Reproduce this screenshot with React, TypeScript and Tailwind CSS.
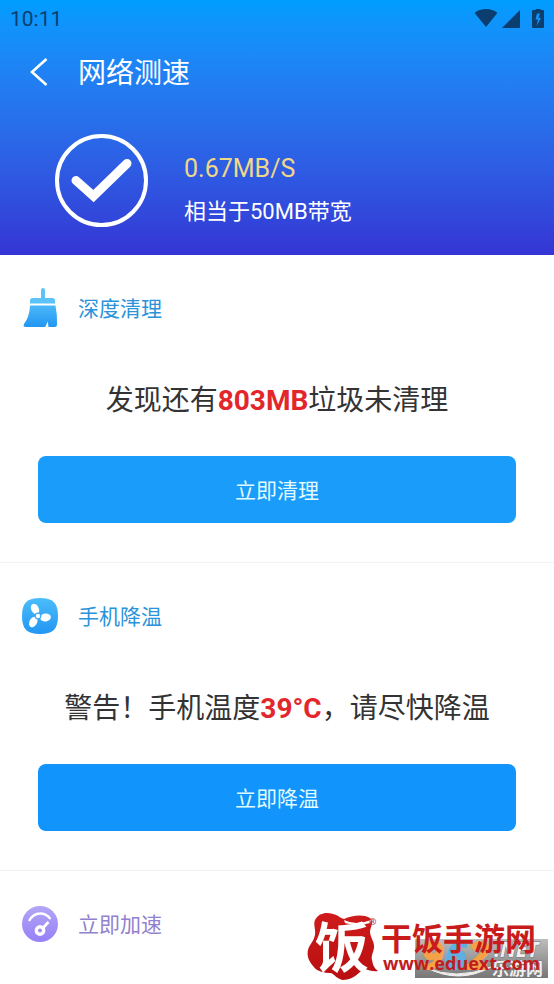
import clsx from "clsx"
import React from "react"

const FOCUS_OUTLINE =
  "outline-none focus-visible:ring-2 focus-visible:ring-sky-200"

const StatusBar = () => {
  return (
    <div className="flex h-[38px] items-center justify-between px-[10px] text-[#0b3e6e]">
      <div className="pt-px text-[21px]">10:11</div>
      <div className="flex items-center">
        <svg className="h-5 w-6" viewBox="0 0 24 20" fill="currentColor">
          <path d="M12 18 .6 4C3.800 1 7.600 0 12 0S20.200 1 23.400 4Z" />
        </svg>
        <svg className="ml-1 h-5 w-[18px]" viewBox="0 0 18 20" fill="currentColor">
          <path d="M18 1v18H0Z" />
        </svg>
        <svg className="ml-3 h-5 w-3" viewBox="0 0 12 20" fill="currentColor">
          <path
            fillRule="evenodd"
            d="M3.500-1h5v2H11q1 0 1 1v16q0 1-1 1H1q-1 0-1-1V2q0-1 1-1h2.500ZM5 4.500 3.500 10.500H6L4.500 17 9 9H6.500L8 4.500Z"
          />
        </svg>
      </div>
    </div>
  )
}

const BroomIcon = () => {
  return (
    <svg className="h-10 w-9" viewBox="0 0 36 40">
      <defs>
        <linearGradient id="broom" x1="0" y1="0" x2="0" y2="1">
          <stop offset="0" stopColor="#4cb8f8" />
          <stop offset="1" stopColor="#2196f3" />
        </linearGradient>
      </defs>
      <path
        d="M19 2q0-2 2-2t2 2v8h7.500q2.500 0 2.500 2.500V15.500H8V12.500Q8 10 10.500 10H19Z"
        fill="#5bc3fa"
      />
      <path
        d="M8 17.500h25.500q2 10 1.500 19.500-.3 2-2 2h-6.500l-.7-5.500-2.600 5.500H4q-3.500 0-2-3 5.500-7 6-18.500Z"
        fill="url(#broom)"
      />
    </svg>
  )
}

const FanIcon = () => {
  return (
    <svg className="size-9" viewBox="0 0 36 36">
      <defs>
        <linearGradient id="fan" x1="0" y1="0" x2="0" y2="1">
          <stop offset="0" stopColor="#4bbdfa" />
          <stop offset="1" stopColor="#2296f3" />
        </linearGradient>
      </defs>
      <path
        d="M18 0C31 0 36 5 36 18S31 36 18 36 0 31 0 18 5 0 18 0Z"
        fill="url(#fan)"
      />
      <g fill="#fff">
        <ellipse cx="13" cy="11" rx="3.800" ry="5.600" transform="rotate(-25 13 11)" />
        <ellipse cx="23.500" cy="19.500" rx="5.400" ry="4" transform="rotate(-8 23.500 19.500)" />
        <ellipse cx="11.300" cy="24" rx="3.800" ry="5.600" transform="rotate(28 11.300 24)" />
      </g>
      <circle cx="16" cy="18" r="2.800" fill="#fff" stroke="#3cabf7" strokeWidth="1.200" />
    </svg>
  )
}

const GaugeIcon = () => {
  return (
    <svg className="size-9" viewBox="0 0 36 36" fill="none">
      <defs>
        <linearGradient id="gauge" x1="0" y1="0" x2="0" y2="1">
          <stop offset="0" stopColor="#b3a6f6" />
          <stop offset="1" stopColor="#9680f6" />
        </linearGradient>
      </defs>
      <circle cx="18" cy="18" r="18" fill="url(#gauge)" />
      <path d="M7 15C10 9.500 13 7.500 18 7.500S25.500 9 28.500 13" stroke="#fff" strokeWidth="2.400" />
      <path d="m20 23 6.500-7" stroke="#fff" strokeWidth="2.600" />
      <circle cx="18" cy="24.500" r="3.700" stroke="#fff" strokeWidth="3.400" />
    </svg>
  )
}

const SectionTitle = ({
  icon,
  className,
  children,
}: {
  icon: React.ReactNode
  className: string
  children: React.ReactNode
}) => {
  return (
    <div className="flex h-9 items-center">
      {icon}
      <h2 className={clsx("ml-5 pt-1 text-[21px]", className)}>{children}</h2>
    </div>
  )
}

const TaskSection = ({
  icon,
  title,
  action,
  buttonClassName,
  children,
}: {
  icon: React.ReactNode
  title: string
  action: string
  buttonClassName: string
  children: React.ReactNode
}) => {
  return (
    <section className="border-b border-[#f3f3f3] px-[38px] pt-[35px] pb-[39px]">
      <div className="-ml-4">
        <SectionTitle icon={icon} className="text-[#2b93d9]">
          {title}
        </SectionTitle>
      </div>
      <p className="mt-[54px] text-center text-[28px] leading-[42px] whitespace-nowrap text-[#333]">
        {children}
      </p>
      <button
        type="button"
        className={clsx(
          "mt-[34px] h-[67px] w-full rounded-lg pt-1 text-[21px] text-[#e2fbff]",
          FOCUS_OUTLINE,
          buttonClassName,
        )}
      >
        {action}
      </button>
    </section>
  )
}

const Watermark = () => {
  return (
    <div className="pointer-events-none absolute right-0 bottom-0">
      <svg
        className="h-[80px] w-[254px]"
        viewBox="300 904 254 80"
        fontFamily="'Open Sans', 'Noto Sans CJK SC', sans-serif"
        fontWeight="bold"
      >
        <defs>
          <linearGradient id="plate" x1="0" y1="0" x2="0" y2="1">
            <stop offset="0" stopColor="#bdbdbd" />
            <stop offset="1" stopColor="#777" />
          </linearGradient>
          <linearGradient id="seal" x1="0" y1="0" x2="0" y2="1">
            <stop offset="0" stopColor="#cf1c1c" />
            <stop offset="1" stopColor="#b80f10" />
          </linearGradient>
        </defs>
        <rect x="415" y="939" width="133" height="39" fill="url(#plate)" />
        <path d="M425 967q30 14 66 0-32 18-66 0Z" fill="#eee" stroke="#eee" />
        <g fontSize="38" fontStyle="italic" strokeWidth="2">
          <text x="422" y="969" fill="#f5a247" stroke="#f5a247">9</text>
          <text x="445" y="969" fill="#5fb0e2" stroke="#5fb0e2">6</text>
          <text x="468" y="969" fill="#f5a247" stroke="#f5a247">2</text>
        </g>
        <g fill="#f0f0f0" stroke="#777" strokeWidth="1" paintOrder="stroke">
          <text x="494" y="957" fontSize="21" fontStyle="italic">.NET</text>
          <text x="492" y="975" fontSize="17">乐游网</text>
        </g>

        <path
          d="M315 920c4-7 11-8 18-6 5 1 7 4 11 5 8-4 20-5 26-1 4 4 1 8 0 13 0 7 5 11 4 17-1 5-3 8-2 12 1 5 2 8 6 11-5 1-9-1-13-2-6 2-10 11-22 11-6-1-8-5-12-7-6 0-14-1-18-7-5-6-7-12-4-19 2-4 5-7 6-12 1-6-2-10 0-15Z"
          fill="url(#seal)"
        />
        <path d="M344 920q12 6 27 0l-1 3q-12 4-25 0Z" fill="#fff" />
        <text x="315" y="968" fontSize="54" fill="#fff">饭</text>
        <text x="369" y="925" fontSize="9" fill="#b44">®</text>
        <text x="381" y="950" fontSize="31" fill="#c91a1c">干饭手游网</text>
        <text x="383" y="970" fontSize="18" fill="#c01c1f">www.eduext.com</text>
      </svg>
    </div>
  )
}

export default function App() {
  return (
    <div className="relative min-h-screen bg-white font-['Roboto','Noto_Sans_CJK_SC',sans-serif]">
      <header className="bg-linear-to-b from-[#009dff] to-[#3434d4]">
        <StatusBar />
        <div className="flex h-[68px] items-center text-white">
          <a
            href="#back"
            aria-label="返回"
            className={clsx("ml-[30px] w-12", FOCUS_OUTLINE)}
          >
            <svg className="h-7 w-[18px]" viewBox="0 0 18 28" fill="none">
              <path d="M16.500 1 2 14l14.500 13" stroke="#fff" strokeWidth="2.600" />
            </svg>
          </a>
          <h1 className="pt-1 text-[28px]">网络测速</h1>
        </div>
        <div className="flex items-start pt-7 pb-[22px] pl-[55px]">
          <svg className="size-[93px]" viewBox="0 0 93 93" fill="none" stroke="#fff">
            <circle cx="46.500" cy="46.500" r="44.500" strokeWidth="4" />
            <path
              d="M21 46.500 38.500 62 72 29.500"
              strokeWidth="9"
              strokeLinecap="round"
            />
          </svg>
          <div className="ml-9 pt-[13px] leading-[43px]">
            <div className="text-[25px] text-[#f0d888]">0.67MB/S</div>
            <div className="text-[22px] text-white">相当于50MB带宽</div>
          </div>
        </div>
      </header>

      <main>
        <TaskSection
          icon={<BroomIcon />}
          title="深度清理"
          action="立即清理"
          buttonClassName="bg-[#199cfa]"
        >
          发现还有<b className="text-[#e3262b]">803MB</b>垃圾未清理
        </TaskSection>
        <TaskSection
          icon={<FanIcon />}
          title="手机降温"
          action="立即降温"
          buttonClassName="bg-[#1194fc]"
        >
          警告！手机温度<b className="text-[#e3262b]">39°C</b>，请尽快降温
        </TaskSection>
        <section className="px-[22px] pt-[35px]">
          <SectionTitle icon={<GaugeIcon />} className="text-[#9182cf]">
            立即加速
          </SectionTitle>
        </section>
      </main>

      <Watermark />
    </div>
  )
}
